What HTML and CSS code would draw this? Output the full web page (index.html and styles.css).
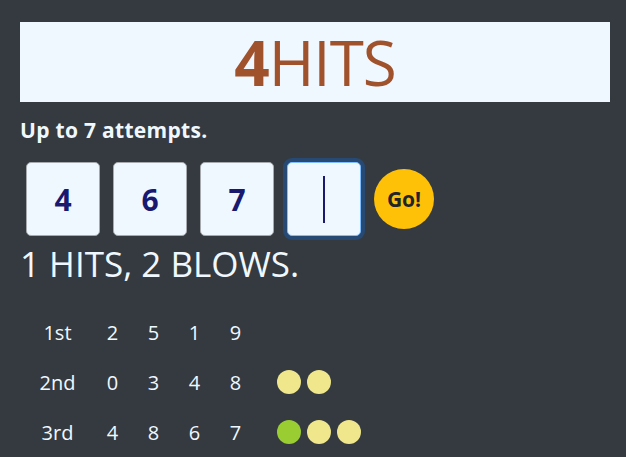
FILE: index.html
```html
<!DOCTYPE html>
<html>
<head>
<meta charset="utf-8">
<link rel="stylesheet" href="styles.css">
</head>
<body>
<div class="app">
  <h1 class="title"><span class="num">4</span>HITS</h1>
  <p class="rule">Up to 7 attempts.</p>
  <div class="entry">
    <div class="digit">4</div>
    <div class="digit">6</div>
    <div class="digit">7</div>
    <div class="digit focus"><span class="caret"></span></div>
    <button class="go">Go!</button>
  </div>
  <p class="result">1 HITS, 2 BLOWS.</p>
  <div class="history">
    <div class="row">
      <span class="ord">1st</span><span>2</span><span>5</span><span>1</span><span>9</span>
      <span class="dots"></span>
    </div>
    <div class="row">
      <span class="ord">2nd</span><span>0</span><span>3</span><span>4</span><span>8</span>
      <span class="dots"><i class="dot blow"></i><i class="dot blow"></i></span>
    </div>
    <div class="row">
      <span class="ord">3rd</span><span>4</span><span>8</span><span>6</span><span>7</span>
      <span class="dots"><i class="dot hit"></i><i class="dot blow"></i><i class="dot blow"></i></span>
    </div>
  </div>
</div>
</body>
</html>
```

FILE: styles.css
```css
* { box-sizing: border-box; }
html, body { margin: 0; padding: 0; }
body {
  background: #343a40;
  color: #f0f8ff;
  font-family: "Open Sans", "Noto Sans", sans-serif;
  width: 626px;
  height: 457px;
  overflow: hidden;
}
.app { padding: 22px 16px 0 20px; }
.title {
  margin: 0;
  height: 80px;
  background: #f0f8ff;
  color: #a0522d;
  font-weight: 400;
  font-size: 62px;
  line-height: 80px;
  text-align: center;
  letter-spacing: -1px;
}
.title .num { font-weight: 700; }
.rule {
  margin: 14px 0 0 0;
  font-size: 21px;
  font-weight: 700;
  line-height: 28px;
  letter-spacing: 0.3px;
}
.entry {
  display: flex;
  align-items: center;
  gap: 13px;
  margin: 18px 0 0 6px;
}
.digit {
  width: 74px;
  height: 74px;
  background: #f0f8ff;
  border: 1px solid #a6a9ad;
  border-radius: 5px;
  display: flex;
  align-items: center;
  justify-content: center;
  color: #191970;
  font-size: 30px;
  font-weight: 700;
}
.digit.focus {
  border-color: #80bdff;
  box-shadow: 0 0 0 4px #264a73;
}
.caret {
  width: 2px;
  height: 47px;
  background: #191970;
}
.go {
  width: 60px;
  height: 60px;
  border-radius: 50%;
  border: none;
  background: #ffc107;
  color: #212529;
  font-family: inherit;
  font-size: 21px;
  font-weight: 700;
  padding: 0;
}
.result {
  margin: 7px 0 0 0;
  font-size: 35px;
  font-weight: 500;
  line-height: 42px;
}
.history { margin-top: 22px; }
.row {
  display: grid;
  grid-template-columns: 72px 41px 41px 41px 41px 1fr;
  height: 50px;
  align-items: center;
  font-size: 20px;
  font-weight: 500;
}
.row span { text-align: center; }
.row .ord { padding-left: 3px; }
.row .dots {
  display: flex;
  gap: 6px;
  padding-left: 21px;
}
.dot {
  width: 24px;
  height: 24px;
  border-radius: 50%;
  display: block;
}
.dot.blow { background: #f0e68c; }
.dot.hit { background: #9acd32; }
```
